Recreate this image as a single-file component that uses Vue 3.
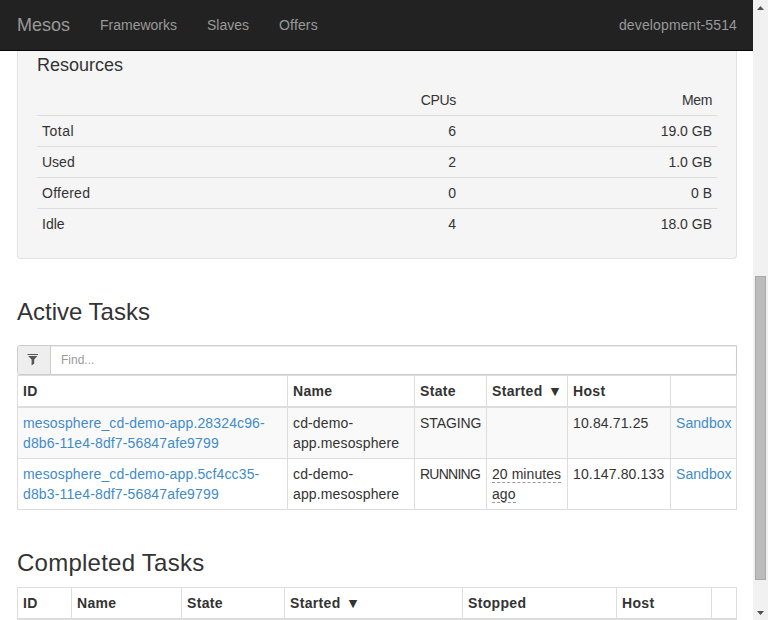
<script setup>
const resources = [
  ['Total', '6', '19.0 GB'],
  ['Used', '2', '1.0 GB'],
  ['Offered', '0', '0 B'],
  ['Idle', '4', '18.0 GB'],
]
const tasks = [
  { id: ['mesosphere_cd-demo-app.28324c96-', 'd8b6-11e4-8df7-56847afe9799'], state: 'STAGING', started: [], host: '10.84.71.25' },
  { id: ['mesosphere_cd-demo-app.5cf4cc35-', 'd8b3-11e4-8df7-56847afe9799'], state: 'RUNNING', started: ['20 minutes', 'ago'], host: '10.147.80.133' },
]
const activeCols = [270, 127, 72, 81, 103, 66]
const doneCols = [54, 110, 103, 178, 154, 95, 25]
</script>

<template>
  <div class="window">
    <div class="page">
      <nav class="navbar">
        <a class="brand">Mesos</a>
        <a>Frameworks</a>
        <a>Slaves</a>
        <a class="offers">Offers</a>
        <span class="cluster">development-5514</span>
      </nav>
      <main>
        <section class="well">
          <h4>Resources</h4>
          <table class="res">
            <thead>
              <tr><td></td><td>CPUs</td><td>Mem</td></tr>
            </thead>
            <tbody>
              <tr v-for="r in resources" :key="r[0]" :class="r[0].toLowerCase()">
                <td v-for="(c, i) in r" :key="i">{{ c }}</td>
              </tr>
            </tbody>
          </table>
        </section>

        <h3 class="active">Active Tasks</h3>
        <div class="finder">
          <span class="addon">
            <svg width="12" height="13" viewBox="0 0 12 13"><path d="M0.5 1H11V2H0.5ZM1.2 3H10.3L7.2 6.5V10.6L4.6 12.5V6.5Z" fill="#555" /></svg>
          </span>
          <div class="field">Find...</div>
        </div>
        <table class="grid">
          <colgroup><col v-for="(w, i) in activeCols" :key="i" :style="{ width: w + 'px' }" /></colgroup>
          <thead>
            <tr><th>ID</th><th>Name</th><th>State</th><th>Started <i>▼</i></th><th>Host</th><th></th></tr>
          </thead>
          <tbody>
            <tr v-for="t in tasks" :key="t.host">
              <td><a>{{ t.id[0] }}<br />{{ t.id[1] }}</a></td>
              <td>cd-demo-<br />app.mesosphere</td>
              <td :class="t.state.toLowerCase()">{{ t.state }}</td>
              <td class="started"><div v-for="s in t.started" :key="s"><abbr>{{ s }}</abbr></div></td>
              <td>{{ t.host }}</td>
              <td class="box"><a>Sandbox</a></td>
            </tr>
          </tbody>
        </table>

        <h3 class="done">Completed Tasks</h3>
        <table class="grid">
          <colgroup><col v-for="(w, i) in doneCols" :key="i" :style="{ width: w + 'px' }" /></colgroup>
          <thead>
            <tr><th>ID</th><th>Name</th><th>State</th><th>Started <i>▼</i></th><th>Stopped</th><th>Host</th><th></th></tr>
          </thead>
        </table>
      </main>
    </div>
    <div class="scrollbar">
      <svg width="15" height="15"><path d="M4 10H11L7.5 6Z" fill="#505050" /></svg>
      <div class="thumb"></div>
      <svg width="15" height="15"><path d="M4 6H11L7.5 10Z" fill="#505050" /></svg>
    </div>
  </div>
</template>

<style>
body { overflow: hidden; background: #fff; }
</style>
<style scoped>
* { box-sizing: border-box; }
.window { display: flex; width: 768px; height: 620px; overflow: hidden; font: 14px/20px "Liberation Sans", Arial, sans-serif; color: #333; }
.page { width: 753px; }
.navbar { display: flex; align-items: center; height: 51px; padding: 0 16px 0 17px; background: #222; border-bottom: 1px solid #080808; color: #999; }
.navbar a { margin-right: 30px; }
.navbar .brand { font-size: 18px; }
.navbar .offers { letter-spacing: .15px; }
.cluster { margin-left: auto; letter-spacing: .13px; }
main { padding: 0 16px 0 17px; }
.well { height: 208px; padding: 0 19px; background: #f5f5f5; border: 1px solid #e3e3e3; border-top: 0; border-radius: 0 0 4px 4px; }
h3, h4 { margin: 0; font-weight: 400; }
h4 { font-size: 18px; line-height: 20px; padding-top: 4px; height: 33px; }
table { border-spacing: 0; table-layout: fixed; width: 100%; }
.res td { height: 31px; padding: 5px; border-top: 1px solid #ddd; text-align: right; }
.res thead td { border-top-color: transparent; letter-spacing: -.35px; }
.res td:first-child { text-align: left; width: 202px; }
.res td:nth-child(2) { width: 222px; }
.total td:first-child { letter-spacing: .5px; }
.offered td:first-child { letter-spacing: .25px; }
h3 { font-size: 24px; line-height: 26px; }
h3.active { padding-top: 40px; height: 86px; }
h3.done { padding-top: 40px; height: 77px; letter-spacing: .25px; }
.finder { display: flex; height: 30px; border: 1px solid #ccc; border-radius: 3px 0 0 3px; font-size: 12px; }
.addon { display: flex; align-items: center; justify-content: center; width: 33px; background: #eee; border-right: 1px solid #ccc; padding: 0 2px 2px 0; border-radius: 2px 0 0 2px; }
.field { flex: 1; padding: 4px 10px; color: #999; box-shadow: inset 0 1px 1px rgba(0, 0, 0, .075); }
.grid { border-left: 1px solid #ddd; border-top: 1px solid #ddd; }
th, .grid td { border-right: 1px solid #ddd; padding: 5px; text-align: left; vertical-align: top; white-space: nowrap; letter-spacing: .14px; }
th { height: 32px; border-bottom: 2px solid #ddd; letter-spacing: .34px; }
th i { display: inline-block; font: 11px/11px "DejaVu Sans", sans-serif; margin-left: 4px; vertical-align: 1px; }
.grid td { height: 51px; border-bottom: 1px solid #ddd; }
.grid td.started { letter-spacing: .06px; }
.grid td.staging { letter-spacing: -.1px; }
.grid td.running { letter-spacing: -.75px; }
.grid td.box { letter-spacing: .05px; }
.grid tbody tr:first-child td { background: #f9f9f9; }
.grid a { color: #428bca; }
abbr { display: inline-block; height: 19px; line-height: 20px; border-bottom: 1px dashed #999; vertical-align: top; }
.scrollbar { width: 15px; background: #f1f1f1; display: flex; flex-direction: column; }
.thumb { width: 11px; height: 304px; margin: 261px 0 25px 2px; border: 1px solid #a8a8a8; background: #bcbcbc; }
</style>
